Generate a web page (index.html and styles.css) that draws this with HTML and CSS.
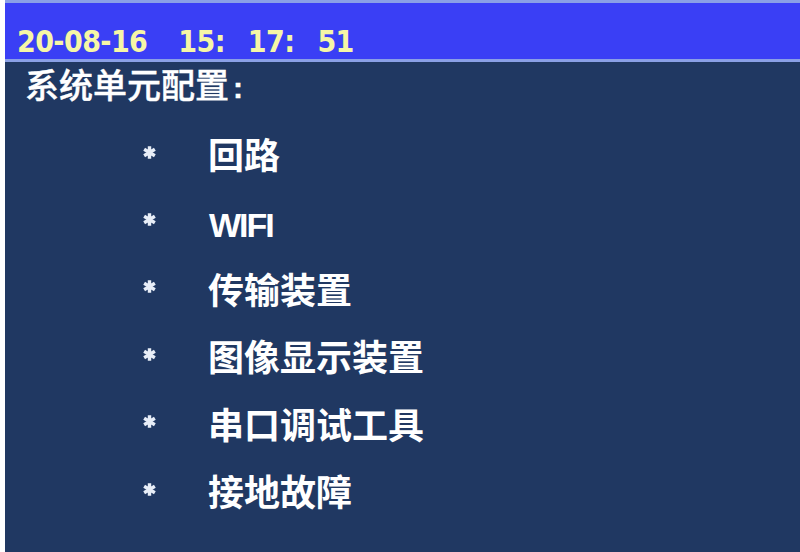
FILE: index.html
```html
<!DOCTYPE html>
<html lang="zh-CN">
<head>
<meta charset="utf-8">
<title>系统单元配置</title>
<link rel="stylesheet" href="styles.css">
</head>
<body>
<div class="screen">
  <div class="header">
    <div class="clock">
      <span class="date">20-08-16</span>
      <span class="time">15:</span>
      <span class="time">17:</span>
      <span class="time">51</span>
    </div>
  </div>
  <div class="title">系统单元配置<span class="colon">:</span></div>
  <ul class="menu">
    <li class="item"><svg class="star" viewBox="0 0 14 14"><path d="M7 1.2V12.8M2 4L12 10M12 4L2 10"/></svg><span class="label">回路</span></li>
    <li class="item"><svg class="star" viewBox="0 0 14 14"><path d="M7 1.2V12.8M2 4L12 10M12 4L2 10"/></svg><span class="label latin">WIFI</span></li>
    <li class="item"><svg class="star" viewBox="0 0 14 14"><path d="M7 1.2V12.8M2 4L12 10M12 4L2 10"/></svg><span class="label">传输装置</span></li>
    <li class="item"><svg class="star" viewBox="0 0 14 14"><path d="M7 1.2V12.8M2 4L12 10M12 4L2 10"/></svg><span class="label">图像显示装置</span></li>
    <li class="item"><svg class="star" viewBox="0 0 14 14"><path d="M7 1.2V12.8M2 4L12 10M12 4L2 10"/></svg><span class="label">串口调试工具</span></li>
    <li class="item"><svg class="star" viewBox="0 0 14 14"><path d="M7 1.2V12.8M2 4L12 10M12 4L2 10"/></svg><span class="label">接地故障</span></li>
  </ul>
</div>
</body>
</html>
```
FILE: styles.css
```css
html, body {
  margin: 0;
  padding: 0;
  background: #ffffff;
}
body {
  width: 800px;
  height: 552px;
  overflow: hidden;
}
.screen {
  margin-left: 5px;
  height: 552px;
  background: #203862;
  overflow: hidden;
}
.header {
  height: 32px;
  padding-top: 24px;
  padding-left: 12px;
  background: #3a3ff5;
  border-top: 3px solid #8aa0e6;
  border-bottom: 3px solid #8aa0e6;
  box-sizing: content-box;
}
.clock {
  display: flex;
  font-family: "DejaVu Sans Condensed", "DejaVu Sans", sans-serif;
  font-stretch: condensed;
  font-weight: bold;
  font-size: 30px;
  line-height: 30px;
  letter-spacing: -0.6px;
  color: #f6f6a6;
}
.date {
  margin-right: 31px;
}
.time {
  margin-right: 23px;
}
.title {
  margin-top: 2px;
  padding-left: 20px;
  font-family: "Noto Sans CJK SC", sans-serif;
  font-weight: 500;
  font-size: 34px;
  line-height: 40px;
  color: #ffffff;
  -webkit-text-stroke: 0.4px #ffffff;
}
.colon {
  font-family: "Liberation Sans", Arial, sans-serif;
  font-weight: bold;
  font-size: 30px;
  margin-left: 4px;
}
.menu {
  list-style: none;
  margin: 12px 0 0 0;
  padding: 0 0 0 137px;
}
.item {
  display: flex;
  align-items: center;
  height: 67.4px;
}
.star {
  width: 15px;
  height: 15px;
  margin-bottom: 3px;
  margin-right: 51px;
  flex: none;
}
.star path {
  stroke: #e8eef8;
  stroke-width: 3.2;
  fill: none;
}
.label {
  font-family: "Noto Sans CJK SC", sans-serif;
  font-weight: bold;
  font-size: 36px;
  line-height: 67px;
  color: #ffffff;
}
.label.latin {
  font-family: "Liberation Sans", Arial, sans-serif;
  font-size: 34px;
  letter-spacing: -2px;
  margin-left: 1px;
  padding-top: 8px;
}
```
